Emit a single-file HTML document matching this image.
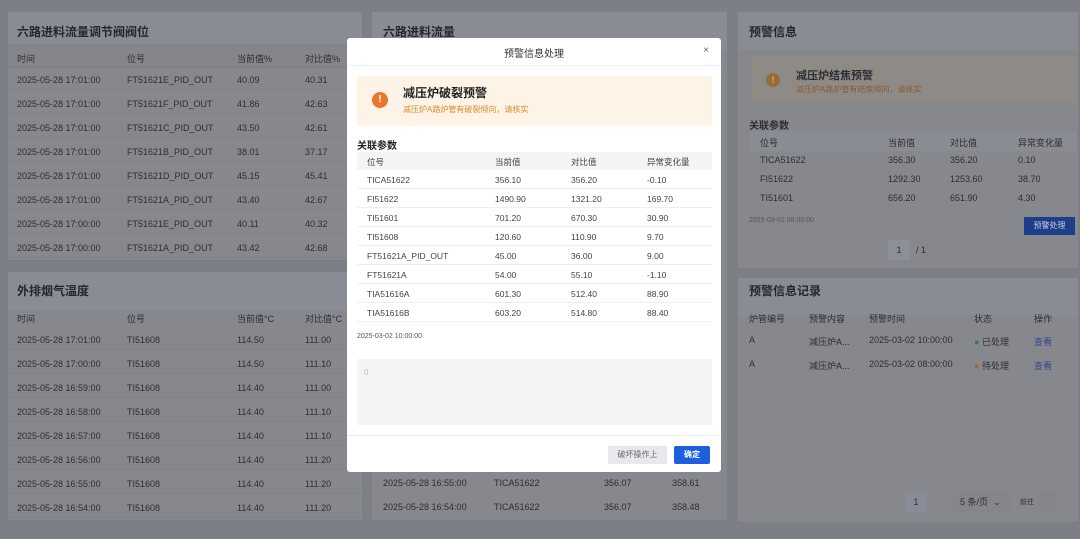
<!DOCTYPE html>
<html><head><meta charset="utf-8"><style>
*{margin:0;padding:0;box-sizing:border-box}
body{width:1080px;height:539px;overflow:hidden;background:#7d7f86;font-family:"Liberation Sans","Noto Sans CJK SC",sans-serif;color:#2c2e33;position:relative;font-size:9px}
.a{position:absolute;white-space:nowrap}
.card{position:absolute;background:#86888e}
.ch{position:absolute;left:0;right:0;top:0;height:38px;background:#898c95}
.t{font-size:12px;font-weight:bold;color:#25272c}
.row{position:absolute;left:0;right:0;height:24px;border-bottom:1px solid #7d7f85}
.m{position:absolute;left:347px;top:38px;width:374px;height:434px;background:#fff;border-radius:3px}
.mr{position:absolute;left:10px;width:355px;height:19px;border-bottom:1px solid #eceef1;font-size:8.5px;color:#444}
.mr span{position:absolute;top:5px}
</style></head><body>

<div class="card" style="left:8px;top:12px;width:354px;height:248px">
<div class="ch"></div>
<div class="a t" style="left:9px;top:11px">六路进料流量调节阀阀位</div>
<div class="row" style="top:32px;background:#84868c"></div>
<div class="a" style="left:9px;top:40px">时间</div><div class="a" style="left:119px;top:40px">位号</div><div class="a" style="left:229px;top:40px">当前值%</div><div class="a" style="left:297px;top:40px">对比值%</div>
</div>

<div class="card" style="left:8px;top:272px;width:354px;height:248px">
<div class="ch"></div>
<div class="a t" style="left:9px;top:10px">外排烟气温度</div>
<div class="a" style="left:9px;top:40px">时间</div><div class="a" style="left:119px;top:40px">位号</div><div class="a" style="left:229px;top:40px">当前值°C</div><div class="a" style="left:297px;top:40px">对比值°C</div>
</div>

<div class="card" style="left:372px;top:12px;width:355px;height:508px">
<div class="ch"></div>
<div class="a t" style="left:11px;top:11px">六路进料流量</div>
<div class="a" style="left:11px;top:466px">2025-05-28 16:55:00</div><div class="a" style="left:122px;top:466px">TICA51622</div><div class="a" style="left:232px;top:466px">356.07</div><div class="a" style="left:300px;top:466px">358.61</div>
<div class="a" style="left:11px;top:490px">2025-05-28 16:54:00</div><div class="a" style="left:122px;top:490px">TICA51622</div><div class="a" style="left:232px;top:490px">356.07</div><div class="a" style="left:300px;top:490px">358.48</div>
</div>

<div class="card" style="left:738px;top:12px;width:340px;height:256px">
<div class="ch"></div>
<div class="a t" style="left:11px;top:11px">预警信息</div>
<div class="a" style="left:14px;top:44px;width:326px;height:46px;background:#8e8b87"></div>
<div class="a" style="left:28px;top:61px;width:14px;height:14px;border-radius:50%;background:#9a6a3c;color:#c9b090;font-size:9px;font-weight:bold;text-align:center;line-height:14px">!</div>
<div class="a" style="left:58px;top:55px;font-size:11px;font-weight:bold">减压炉结焦预警</div>
<div class="a" style="left:58px;top:72px;font-size:8px;color:#8a5a30">减压炉A路炉管有结焦倾向，请核实</div>
<div class="a" style="left:11px;top:105px;font-weight:bold;font-size:10px">关联参数</div>
<div class="a" style="left:11px;top:120px;width:327px;height:19px;background:#8a8c93"></div>
<div class="a" style="left:22px;top:124px">位号</div><div class="a" style="left:150px;top:124px">当前值</div><div class="a" style="left:212px;top:124px">对比值</div><div class="a" style="left:280px;top:124px">异常变化量</div>
<div class="a" style="left:22px;top:143px">TICA51622</div><div class="a" style="left:150px;top:143px">356.30</div><div class="a" style="left:212px;top:143px">356.20</div><div class="a" style="left:280px;top:143px">0.10</div>
<div class="a" style="left:22px;top:162px">FI51622</div><div class="a" style="left:150px;top:162px">1292.30</div><div class="a" style="left:212px;top:162px">1253.60</div><div class="a" style="left:280px;top:162px">38.70</div>
<div class="a" style="left:22px;top:181px">TI51601</div><div class="a" style="left:150px;top:181px">656.20</div><div class="a" style="left:212px;top:181px">651.90</div><div class="a" style="left:280px;top:181px">4.30</div>
<div class="a" style="left:11px;top:205px;font-size:7px;color:#555">2025-03-02 08:00:00</div>
<div class="a" style="left:286px;top:205px;width:51px;height:18px;background:#1f3e8a;color:#c8d0e0;font-size:8px;text-align:center;line-height:18px">预警处理</div>
<div class="a" style="left:150px;top:228px;width:22px;height:20px;background:#8b8f98;text-align:center;line-height:20px">1</div>
<div class="a" style="left:178px;top:233px">/ 1</div>
</div>

<div class="card" style="left:738px;top:278px;width:340px;height:244px">
<div class="ch"></div>
<div class="a t" style="left:11px;top:4px">预警信息记录</div>
<div class="a" style="left:11px;top:34px">炉管编号</div><div class="a" style="left:71px;top:34px">预警内容</div><div class="a" style="left:131px;top:34px">预警时间</div><div class="a" style="left:236px;top:34px">状态</div><div class="a" style="left:296px;top:34px">操作</div>
<div class="a" style="left:11px;top:57px">A</div><div class="a" style="left:71px;top:57px">减压炉A...</div><div class="a" style="left:131px;top:57px">2025-03-02 10:00:00</div><div class="a" style="left:236px;top:57px"><span style="color:#3c7a3c">●</span> 已处理</div><div class="a" style="left:296px;top:57px;color:#34488c">查看</div>
<div class="a" style="left:11px;top:81px">A</div><div class="a" style="left:71px;top:81px">减压炉A...</div><div class="a" style="left:131px;top:81px">2025-03-02 08:00:00</div><div class="a" style="left:236px;top:81px"><span style="color:#9a6a2c">●</span> 待处理</div><div class="a" style="left:296px;top:81px;color:#34488c">查看</div>
<div class="a" style="left:168px;top:214px;width:20px;height:20px;background:#888c96;text-align:center;line-height:20px">1</div>
<div class="a" style="left:216px;top:214px;width:58px;height:20px;background:#84868c;padding-left:6px;line-height:20px">5 条/页 &nbsp;⌄</div>
<div class="a" style="left:282px;top:219px;font-size:7px">前往</div>
<div class="a" style="left:300px;top:214px;width:20px;height:20px;background:#84868c"></div>
</div>

<div id="L1"></div>

<div class="m">
<div class="a" style="left:0;right:0;top:7px;text-align:center;font-size:10px;color:#333">预警信息处理</div>
<div class="a" style="right:12px;top:7px;font-size:10px;color:#666">×</div>
<div class="a" style="left:0;right:0;top:27px;height:1px;background:#eceef1"></div>
<div class="a" style="left:10px;top:38px;width:355px;height:50px;background:#fdf3e6"></div>
<div class="a" style="left:25px;top:54px;width:16px;height:16px;border-radius:50%;background:#e8762c;color:#fff;font-size:10px;font-weight:bold;text-align:center;line-height:16px">!</div>
<div class="a" style="left:56px;top:46px;font-size:12px;font-weight:bold;color:#222">减压炉破裂预警</div>
<div class="a" style="left:56px;top:66px;font-size:8px;color:#e08a2a">减压炉A路炉管有破裂倾向，请核实</div>
<div class="a" style="left:10px;top:99px;font-size:10px;font-weight:bold;color:#222">关联参数</div>
<div class="a" style="left:10px;top:114px;width:355px;height:18px;background:#f3f4f6"></div>
<div class="mr" style="top:113px;border:0"><span style="left:10px">位号</span><span style="left:138px">当前值</span><span style="left:214px">对比值</span><span style="left:290px">异常变化量</span></div>
<div class="mr" style="top:132px"><span style="left:10px">TICA51622</span><span style="left:138px">356.10</span><span style="left:214px">356.20</span><span style="left:290px">-0.10</span></div>
<div class="mr" style="top:151px"><span style="left:10px">FI51622</span><span style="left:138px">1490.90</span><span style="left:214px">1321.20</span><span style="left:290px">169.70</span></div>
<div class="mr" style="top:170px"><span style="left:10px">TI51601</span><span style="left:138px">701.20</span><span style="left:214px">670.30</span><span style="left:290px">30.90</span></div>
<div class="mr" style="top:189px"><span style="left:10px">TI51608</span><span style="left:138px">120.60</span><span style="left:214px">110.90</span><span style="left:290px">9.70</span></div>
<div class="mr" style="top:208px"><span style="left:10px">FT51621A_PID_OUT</span><span style="left:138px">45.00</span><span style="left:214px">36.00</span><span style="left:290px">9.00</span></div>
<div class="mr" style="top:227px"><span style="left:10px">FT51621A</span><span style="left:138px">54.00</span><span style="left:214px">55.10</span><span style="left:290px">-1.10</span></div>
<div class="mr" style="top:246px"><span style="left:10px">TIA51616A</span><span style="left:138px">601.30</span><span style="left:214px">512.40</span><span style="left:290px">88.90</span></div>
<div class="mr" style="top:265px"><span style="left:10px">TIA51616B</span><span style="left:138px">603.20</span><span style="left:214px">514.80</span><span style="left:290px">88.40</span></div>
<div class="a" style="left:10px;top:295px;font-size:7px;color:#555">2025-03-02 10:00:00</div>
<div class="a" style="left:10px;top:321px;width:355px;height:66px;background:#f3f4f6;color:#bbb;font-size:8px;padding:9px 7px">0</div>
<div class="a" style="left:0;right:0;top:397px;height:1px;background:#eceef1"></div>
<div class="a" style="left:261px;top:408px;width:59px;height:18px;background:#e8e9ec;color:#666;font-size:8px;text-align:center;line-height:18px">破坏操作上</div>
<div class="a" style="left:327px;top:408px;width:36px;height:18px;background:#1e5fe0;color:#fff;font-size:8px;font-weight:bold;text-align:center;line-height:18px;border-radius:2px">确定</div>
</div>

<script>
var L1=[["2025-05-28 17:01:00","FT51621E_PID_OUT","40.09","40.31"],["2025-05-28 17:01:00","FT51621F_PID_OUT","41.86","42.63"],["2025-05-28 17:01:00","FT51621C_PID_OUT","43.50","42.61"],["2025-05-28 17:01:00","FT51621B_PID_OUT","38.01","37.17"],["2025-05-28 17:01:00","FT51621D_PID_OUT","45.15","45.41"],["2025-05-28 17:01:00","FT51621A_PID_OUT","43.40","42.67"],["2025-05-28 17:00:00","FT51621E_PID_OUT","40.11","40.32"],["2025-05-28 17:00:00","FT51621A_PID_OUT","43.42","42.68"]];
var L2=[["2025-05-28 17:01:00","114.50","111.00"],["2025-05-28 17:00:00","114.50","111.10"],["2025-05-28 16:59:00","114.40","111.00"],["2025-05-28 16:58:00","114.40","111.10"],["2025-05-28 16:57:00","114.40","111.10"],["2025-05-28 16:56:00","114.40","111.20"],["2025-05-28 16:55:00","114.40","111.20"],["2025-05-28 16:54:00","114.40","111.20"]];
var h="";
L1.forEach(function(r,i){var y=75+i*24;h+='<div class="a" style="left:8px;width:354px;top:'+(y+14)+'px;height:1px;background:#7f8187"></div>';[17,127,237,305].forEach(function(x,j){h+='<div class="a" style="left:'+x+'px;top:'+y+'px">'+r[j]+'</div>'})});
L2.forEach(function(r,i){var y=335+i*24;h+='<div class="a" style="left:8px;width:354px;top:'+(y+14)+'px;height:1px;background:#7f8187"></div>';var v=[r[0],"TI51608",r[1],r[2]];[17,127,237,305].forEach(function(x,j){h+='<div class="a" style="left:'+x+'px;top:'+y+'px">'+v[j]+'</div>'})});
document.getElementById("L1").innerHTML=h;
</script>
</body></html>
